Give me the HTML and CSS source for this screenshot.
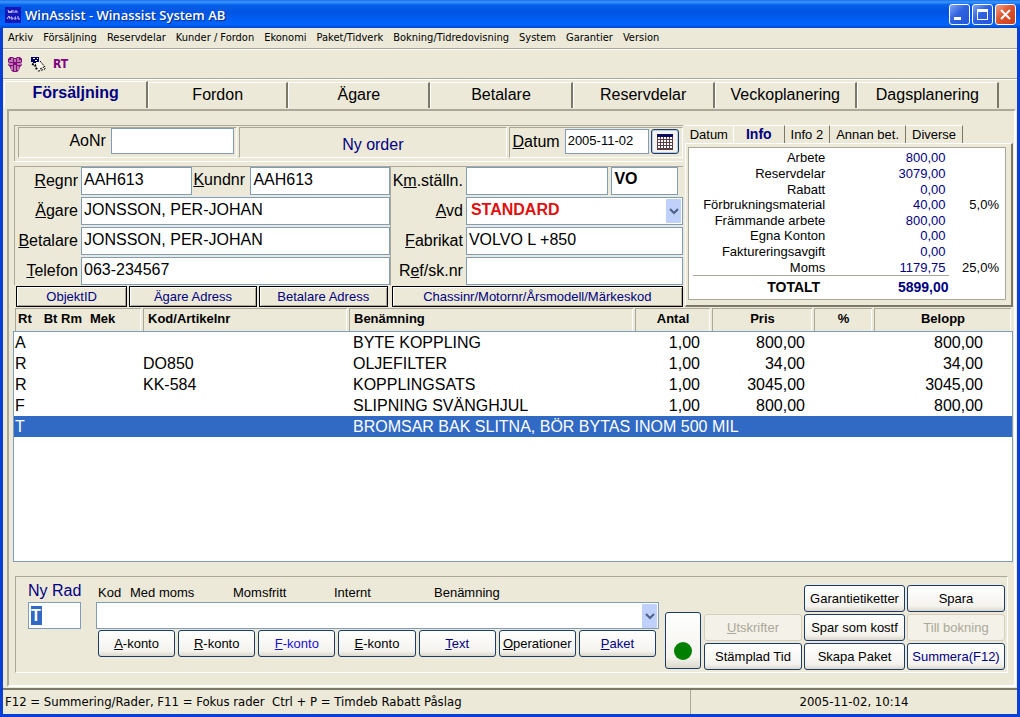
FILE: index.html
```html
<!DOCTYPE html>
<html lang="sv">
<head>
<meta charset="utf-8">
<title>WinAssist - Winassist System AB</title>
<link rel="stylesheet" href="styles.css">
</head>
<body>
<div class="window">
  <header class="titlebar">
    <svg class="app-icon" width="16" height="16" viewBox="0 0 16 16" aria-hidden="true">
      <rect width="16" height="16" fill="#1418b8"/>
      <path d="M3 3l1 3 1-2 1 2 1-3M8 3v3M10 6V4h2v2M2 12l2-3 1 3M7 10h-1v1h2v1H6M11 10h-1v1h1v1H9M13 9v3h2" fill="none" stroke="#c9c4ff"/>
    </svg>
    <h1 class="title">WinAssist - Winassist System AB</h1>
    <div class="caption">
      <button class="cap" aria-label="Minimera"><svg width="19" height="19" viewBox="0 0 19 19"><rect x="4" y="12" width="7" height="3" fill="#fff"/></svg></button>
      <button class="cap" aria-label="Maximera"><svg width="19" height="19" viewBox="0 0 19 19"><path d="M4 4h11v11H4zM5 7h9v7H5z" fill="#fff" fill-rule="evenodd"/></svg></button>
      <button class="cap cap-close" aria-label="Stäng"><svg width="19" height="19" viewBox="0 0 19 19"><path d="M5 5l9 9M14 5l-9 9" stroke="#fff" stroke-width="2"/></svg></button>
    </div>
  </header>

  <div class="client">
    <nav class="menu">
      <a href="#">Arkiv</a><a href="#">Försäljning</a><a href="#">Reservdelar</a><a href="#">Kunder / Fordon</a><a href="#">Ekonomi</a><a href="#">Paket/Tidverk</a><a href="#">Bokning/Tidredovisning</a><a href="#">System</a><a href="#">Garantier</a><a href="#">Version</a>
    </nav>

    <div class="toolbar">
      <button class="tool" aria-label="Kunder"><svg width="16" height="16" viewBox="0 0 16 16">
        <path d="M3 1h3l1 1h2l1-1h3l2 2v3l-1 1 1 2-2 2-1 3-2 2H6l-2-2-1-3-2-2 1-2-1-1V3z" fill="#860a80"/>
        <path d="M5 2v4M11 2v4M3 4v2M13 4v2M2 8h4M10 8h4M5 10v4M11 10v4M8 3v3M8 9v6" stroke="#ece9d8" fill="none"/>
      </svg></button>
      <button class="tool" aria-label="Skriv"><svg width="16" height="16" viewBox="0 0 16 16">
        <path d="M1 1h8v5H6v1H3V6H1z" fill="#000060"/><path d="M3 2h2v1H3zM5 4h2v1H5zM7 2h1v1H7z" fill="#fff"/>
        <path d="M5 8l5-3 5 7-7 3z" fill="#f8f6ec"/>
        <path d="M2 8l3 1 2 5" stroke="#000" stroke-width="2" stroke-dasharray="2 1" fill="none"/>
        <path d="M10 5l5 6v2l-6 2H7M10 13l4-2" stroke="#000" stroke-dasharray="2 1" fill="none"/>
      </svg></button>
      <button class="tool tool-rt">RT</button>
    </div>

    <nav class="tabs">
      <button class="tab active">Försäljning</button><button class="tab">Fordon</button><button class="tab">Ägare</button><button class="tab">Betalare</button><button class="tab">Reservdelar</button><button class="tab">Veckoplanering</button><button class="tab">Dagsplanering</button>
    </nav>

    <main class="page">
      <section class="top">
        <div class="order">
          <div class="order-head">
            <div class="well aonr"><label for="aonr">AoNr</label><input id="aonr" class="field" type="text"></div>
            <div class="well state">Ny order</div>
            <div class="well date"><label for="datum"><u>D</u>atum</label><input id="datum" class="field small" type="text" value="2005-11-02">
              <button class="cal" aria-label="Kalender"><svg width="18" height="18" viewBox="0 0 18 18">
                <rect x="1" y="1" width="16" height="16" fill="#5a3a44"/><rect x="1" y="1" width="16" height="3" fill="#0a0a60"/>
                <path d="M2 5h14M2 8h14M2 11h14M2 14h14" stroke="#fff" stroke-width="2" stroke-dasharray="2 1"/>
              </svg></button></div>
          </div>
          <div class="details">
            <div class="block">
              <label for="regnr"><u>R</u>egnr</label>
              <div class="pair"><input id="regnr" class="field" type="text" value="AAH613"><label for="kundnr"><u>K</u>undnr</label><input id="kundnr" class="field" type="text" value="AAH613"></div>
              <label for="agare"><u>Ä</u>gare</label><input id="agare" class="field" type="text" value="JONSSON, PER-JOHAN">
              <label for="betalare"><u>B</u>etalare</label><input id="betalare" class="field" type="text" value="JONSSON, PER-JOHAN">
              <label for="telefon"><u>T</u>elefon</label><input id="telefon" class="field" type="text" value="063-234567">
            </div>
            <div class="block block-car">
              <label for="km">K<u>m</u>.ställn.</label>
              <div class="pair-km"><input id="km" class="field" type="text"><input class="field strong" type="text" value="VO" aria-label="Märke"></div>
              <label for="avd"><u>A</u>vd</label>
              <div class="combo combo-avd"><select id="avd" class="field"><option>STANDARD</option></select><svg class="drop" width="15" height="24" viewBox="0 0 15 24" aria-hidden="true"><rect width="15" height="24" rx="1"/><path d="M4 10l4 4 4-4"/></svg></div>
              <label for="fabrikat"><u>F</u>abrikat</label><input id="fabrikat" class="field" type="text" value="VOLVO L +850">
              <label for="ref">R<u>e</u>f/sk.nr</label><input id="ref" class="field" type="text">
            </div>
          </div>
          <div class="links">
            <button class="flat">ObjektID</button><button class="flat">Ägare Adress</button><button class="flat">Betalare Adress</button><button class="flat">Chassinr/Motornr/Årsmodell/Märkeskod</button>
          </div>
        </div>

        <aside class="info">
          <nav class="info-tabs">
            <button>Datum</button><button class="active">Info</button><button>Info 2</button><button>Annan bet.</button><button>Diverse</button>
          </nav>
          <div class="info-frame">
            <div class="info-box">
              <table class="sums">
                <tr><th>Arbete</th><td>800,00</td><td class="pct"></td></tr>
                <tr><th>Reservdelar</th><td>3079,00</td><td class="pct"></td></tr>
                <tr><th>Rabatt</th><td>0,00</td><td class="pct"></td></tr>
                <tr><th>Förbrukningsmaterial</th><td>40,00</td><td class="pct">5,0%</td></tr>
                <tr><th>Främmande arbete</th><td>800,00</td><td class="pct"></td></tr>
                <tr><th>Egna Konton</th><td>0,00</td><td class="pct"></td></tr>
                <tr><th>Faktureringsavgift</th><td>0,00</td><td class="pct"></td></tr>
                <tr><th>Moms</th><td>1179,75</td><td class="pct">25,0%</td></tr>
              </table>
              <div class="total"><span>TOTALT</span><b>5899,00</b></div>
            </div>
          </div>
        </aside>
      </section>

      <section class="list">
        <table class="rows">
          <colgroup><col class="c-rt"><col class="c-kod"><col class="c-ben"><col class="c-ant"><col class="c-pris"><col class="c-pct"><col class="c-bel"></colgroup>
          <thead><tr>
            <th><div class="head head-rt"><span>Rt</span><span>Bt Rm</span><span>Mek</span></div></th>
            <th><div class="head">Kod/Artikelnr</div></th>
            <th><div class="head">Benämning</div></th>
            <th><div class="head mid">Antal</div></th>
            <th><div class="head mid">Pris</div></th>
            <th><div class="head mid">%</div></th>
            <th><div class="head mid">Belopp</div></th>
          </tr></thead>
          <tbody>
            <tr><td>A</td><td></td><td>BYTE KOPPLING</td><td>1,00</td><td>800,00</td><td></td><td>800,00</td></tr>
            <tr><td>R</td><td>DO850</td><td>OLJEFILTER</td><td>1,00</td><td>34,00</td><td></td><td>34,00</td></tr>
            <tr><td>R</td><td>KK-584</td><td>KOPPLINGSATS</td><td>1,00</td><td>3045,00</td><td></td><td>3045,00</td></tr>
            <tr><td>F</td><td></td><td>SLIPNING SVÄNGHJUL</td><td>1,00</td><td>800,00</td><td></td><td>800,00</td></tr>
            <tr class="selected"><td>T</td><td></td><td colspan="5">BROMSAR BAK SLITNA, BÖR BYTAS INOM 500 MIL</td></tr>
            <tr class="rest"><td colspan="7"></td></tr>
          </tbody>
        </table>
      </section>

      <section class="entry">
        <div class="newrow"><label for="nyrad">Ny Rad</label><div class="field newrow-field"><input id="nyrad" type="text" value="T"></div></div>
        <div class="line">
          <div class="line-labels"><label for="kod">Kod</label><span>Med moms</span><span>Momsfritt</span><span>Internt</span><span>Benämning</span></div>
          <div class="combo"><select id="kod" class="field"><option></option></select><svg class="drop" width="15" height="24" viewBox="0 0 15 24" aria-hidden="true"><rect width="15" height="24" rx="1"/><path d="M4 10l4 4 4-4"/></svg></div>
          <div class="line-buttons">
            <button class="btn"><u>A</u>-konto</button><button class="btn"><u>R</u>-konto</button><button class="btn blue"><u>F</u>-konto</button><button class="btn"><u>E</u>-konto</button><button class="btn navy"><u>T</u>ext</button><button class="btn"><u>O</u>perationer</button><button class="btn navy"><u>P</u>aket</button>
          </div>
        </div>
        <button class="btn lamp" aria-label="Status"><svg width="20" height="20" viewBox="0 0 20 20"><circle cx="10" cy="10" r="9" fill="#008000"/></svg></button>
        <div class="actions">
          <span></span><button class="btn">Garantietiketter</button><button class="btn">Spara</button>
          <button class="btn" disabled><u>U</u>tskrifter</button><button class="btn">Spar som kostf</button><button class="btn" disabled>Till bokning</button>
          <button class="btn">Stämplad Tid</button><button class="btn">Skapa Paket</button><button class="btn navy">Summera(F12)</button>
        </div>
      </section>
    </main>

    <footer class="status"><span class="keys">F12 = Summering/Rader, F11 = Fokus rader&nbsp; Ctrl + P = Timdeb Rabatt Påslag</span><span class="clock">2005-11-02, 10:14</span></footer>
  </div>
</div>
</body>
</html>
```
FILE: styles.css
```css
* { box-sizing: border-box; }

:root {
  --face: #ece9d8;
  --shade: #aca899;
  --dark: #7b7869;
  --edge: #7f9db9;
  --navy: #000080;
}

body {
  margin: 0;
  background: var(--face);
  color: #000;
  font: 16px/20px "Liberation Sans", Arial, sans-serif;
}

button, input, select { font: inherit; color: inherit; margin: 0; }
button { padding: 0; border: 0; background: none; }

.window {
  display: flex;
  flex-direction: column;
  min-height: 100vh;
  background: #0a3fd6;
}

/* Title bar */
.titlebar {
  display: flex;
  align-items: center;
  gap: 4px;
  height: 28px;
  padding: 1px 4px 0 5px;
  background: linear-gradient(#1c6fe8 0, #3a96ff 2px, #0560e8 5px, #0054e3 12px, #0062fa 22px, #0062fa 25px, #0046c8 28px);
}
.title {
  flex: 1;
  margin: 0;
  color: #fff;
  font: 600 13px/18px "Open Sans", sans-serif;
  text-shadow: 1px 1px 1px #0a2a80;
}
.caption { display: flex; gap: 2px; }
.cap {
  width: 21px;
  height: 21px;
  border: 1px solid #fff;
  border-radius: 3px;
  background: linear-gradient(135deg, #7fa5f5, #2f62e0 45%, #2456d8);
}
.cap svg { display: block; }
.cap-close { background: linear-gradient(135deg, #f0a088, #dc5530 45%, #c83e18); }

.client {
  flex: 1;
  display: flex;
  flex-direction: column;
  margin: 0 3px 3px;
  background: var(--face);
}

/* Menu, toolbar */
.menu {
  display: flex;
  gap: 10px;
  height: 21px;
  padding: 0 5px;
  border-bottom: 1px solid var(--shade);
  font: 11px/19px "DejaVu Sans Condensed", "Noto Sans", sans-serif;
}
.menu a { color: inherit; text-decoration: none; white-space: nowrap; }
.toolbar {
  display: flex;
  align-items: center;
  gap: 7px;
  height: 30px;
  padding: 0 4px;
  border-top: 1px solid #fff;
  border-bottom: 1px solid var(--shade);
}
.tool svg { display: block; }
.tool-rt { color: #800080; font: bold 12px/16px "DejaVu Sans Condensed", sans-serif; }

/* Page tabs */
.tabs {
  display: grid;
  grid-template-columns: 144fr 140fr repeat(5, 142fr);
  padding: 1px 18px 0 1px;
  border-top: 1px solid #fff;
}
.tab {
  height: 26px;
  margin-top: 1px;
  padding-bottom: 1px;
  border-top: 1px solid #fff;
  border-right: 2px solid var(--dark);
  border-left: 1px solid #fff;
}
.tab.active { height: 27px; margin-top: 0; padding-bottom: 4px; color: var(--navy); font-weight: bold; }

/* Page body */
.page {
  flex: 1;
  display: flex;
  flex-direction: column;
  margin: 1px 1px 0 4px;
  padding: 14px 1px 12px 4px;
  border: 2px solid var(--shade);
  border-right-color: #fff;
  border-bottom-color: #fff;
}
.top {
  display: grid;
  grid-template-columns: 668fr 328fr;
  gap: 2px;
  padding-left: 1px;
}
.order-head {
  display: grid;
  grid-template-columns: 219fr 268fr 174fr;
  gap: 2px;
  height: 36px;
  padding: 1px 0 3px 3px;
  border: solid var(--shade);
  border-width: 1px 0 0 1px;
  box-shadow: 0 1px #fff;
}
.well {
  display: flex;
  align-items: flex-start;
  border: 1px solid #fff;
  border-top-color: var(--shade);
  border-left-color: var(--shade);
}
.well label { flex: 1; text-align: right; line-height: 26px; padding-right: 5px; }
.aonr .field { width: 123px; height: 26px; }
.aonr { padding-right: 2px; }
.state { align-items: center; justify-content: center; padding-top: 4px; color: var(--navy); }
.date { padding: 1px 3px 0 0; }
.date .field { width: 84px; height: 25px; }
.field {
  width: 100%;
  min-width: 0;
  height: 28px;
  padding: 0 2px 2px;
  border: 1px solid var(--edge);
  border-radius: 0;
  background: #fff;
}
.field.small { font-size: 13px; }
.field.strong { font-weight: bold; padding-bottom: 4px; }
.cal {
  display: grid;
  place-items: center;
  width: 28px;
  height: 25px;
  margin-left: 2px;
  border: 1px solid #1c3c66;
  border-radius: 3px;
  background: #f4f3ee;
  box-shadow: inset 0 0 0 1px #b8cbe8;
}

.details {
  display: grid;
  grid-template-columns: 375fr 292fr;
  margin-top: 5px;
}
.block {
  display: grid;
  grid-template-columns: 66px 1fr;
  grid-auto-rows: 28px;
  gap: 2px 0;
  align-items: center;
  border-top: 1px solid var(--shade);
  border-left: 1px solid var(--shade);
}
.block-car { grid-template-columns: 75px 1fr; }
.block > label { text-align: right; padding-right: 3px; white-space: nowrap; }
.pair { display: grid; grid-template-columns: 111fr 58px 139fr; }
.pair label { padding-left: 1px; line-height: 26px; }
.pair-km { display: grid; grid-template-columns: 142fr 66fr; gap: 3px; padding-right: 5px; }

.combo { display: grid; }
.combo > * { grid-area: 1 / 1; }
.combo select { appearance: none; padding-left: 4px; }
.combo-avd select { color: #e01010; font-weight: bold; }
.drop { align-self: center; justify-self: end; margin-right: 2px; pointer-events: none; }
.drop rect { fill: #bfd0fa; }
.drop path { fill: none; stroke: #4d6185; stroke-width: 2; }

.links {
  display: grid;
  grid-template-columns: 111fr 127fr 129fr 292fr;
  gap: 2px;
  padding: 1px 0 0 2px;
}
.links .flat:last-child { margin-left: 2px; }
.flat {
  height: 21px;
  border: 1px solid #000;
  box-shadow: inset 1px 1px #fff, inset -1px -1px var(--shade);
  color: var(--navy);
  font-size: 13px;
  line-height: 19px;
}

/* Info card */
.info { display: flex; flex-direction: column; }
.info-tabs { display: flex; height: 18px; font-size: 13px; line-height: 17px; }
.info-tabs button {
  padding: 0 6px;
  border-top: 1px solid #fff;
  border-right: 1px solid var(--dark);
  white-space: nowrap;
}
.info-tabs button:first-child { padding: 0 5px; border-right-color: #fff; }
.info-tabs .active { padding: 0 12px; color: var(--navy); font-weight: bold; font-size: 14px; }
.info-frame {
  flex: 1;
  padding: 3px 5px 5px 2px;
  border: 1px solid #fff;
  border-right: 2px solid var(--dark);
  border-bottom: 2px solid var(--dark);
}
.info-box {
  height: 100%;
  padding: 2px 4px 0;
  border: 1px solid var(--shade);
  background: #fff;
}
.sums {
  width: 100%;
  height: 125px;
  border-collapse: collapse;
  table-layout: fixed;
  font-size: 13px;
  line-height: 15px;
}
.sums th, .sums td { padding: 0; text-align: right; font-weight: normal; white-space: nowrap; }
.sums th { width: 43%; }
.sums td { color: var(--navy); }
.sums .pct { width: 18%; padding-right: 2px; color: #000; }
.total {
  display: grid;
  grid-template-columns: 128fr 129fr;
  width: 83%;
  border-top: 1px solid var(--shade);
  font-weight: bold;
  font-size: 14px;
  line-height: 22px;
  text-align: right;
}
.total b { color: var(--navy); }

/* Order lines */
.list { flex: 1; display: flex; margin-top: 1px; }
.rows {
  width: 100%;
  border-spacing: 0;
  table-layout: fixed;
}
.c-rt { width: 13%; }
.c-kod { width: 20.6%; }
.c-ben { width: 28.6%; }
.c-ant { width: 7.7%; }
.c-pris { width: 10.2%; }
.c-pct { width: 6%; }
.c-bel { width: 13.9%; }
.rows th { height: 23px; padding: 0 2px 0 0; text-align: left; font-size: 13px; }
.rows th:first-child { padding-left: 2px; }
.head {
  height: 23px;
  padding-left: 4px;
  border: solid var(--shade);
  border-width: 1px 0 0 1px;
  box-shadow: inset -1px 0 #fff;
  line-height: 20px;
}
.head.mid { padding: 0; text-align: center; }
.head-rt { display: flex; padding-left: 2px; }
.head-rt span:nth-child(2) { margin-left: 12px; }
.head-rt span:nth-child(3) { margin-left: 8px; }
.rows td { height: 21px; padding: 0; background: #fff; line-height: 21px; white-space: nowrap; }
.rows tbody tr:first-child td { border-top: 1px solid var(--edge); }
.rows td:first-child { padding-left: 1px; border-left: 1px solid var(--edge); }
.rows td:last-child { padding-right: 29px; border-right: 1px solid var(--edge); }
.rows td:nth-child(3) { padding-left: 4px; }
.rows td:nth-child(n+4) { text-align: right; }
.rows td:nth-child(4) { padding-right: 12px; }
.rows td:nth-child(5) { padding-right: 9px; }
.rows .selected td { background: #316ac5; color: #fff; }
.rows .rest td { height: auto; border-bottom: 1px solid var(--edge); }

/* Row entry */
.entry {
  display: flex;
  height: 97px;
  margin: 14px 5px 0 2px;
  padding: 8px 2px 2px 12px;
  border: 1px solid #fff;
  border-top-color: var(--shade);
  border-left-color: var(--shade);
}
.newrow { width: 68px; color: var(--navy); line-height: 12px; }
.newrow label { display: block; height: 17px; }
.newrow-field { display: flex; width: 53px; height: 27px; padding: 3px 2px; }
.newrow-field input {
  width: 11px;
  height: 19px;
  padding: 0;
  border: 0;
  background: #316ac5;
  color: #fff;
  font-weight: bold;
}
.line { flex: 1; min-width: 0; }
.line-labels {
  display: grid;
  grid-template-columns: 32fr 103fr 101fr 100fr 225fr;
  height: 17px;
  padding-left: 2px;
  font-size: 13px;
  line-height: 16px;
}
.line .combo select { height: 27px; }
.line-buttons {
  display: grid;
  grid-template-columns: repeat(7, 1fr);
  gap: 3px;
  padding: 1px 3px 0 2px;
}
.btn {
  height: 27px;
  border: 1px solid #1c3c66;
  border-radius: 3px;
  background: linear-gradient(#fff, #f4f3ee 80%, #dcd8cc);
  font-size: 13px;
  line-height: 20px;
  white-space: nowrap;
}
.btn.navy { color: var(--navy); }
.btn.blue { color: #1a10d0; }
.btn:disabled { border-color: #d2cfbf; background: #f3f1e8; color: #aca899; }
.lamp {
  display: flex;
  align-items: flex-end;
  justify-content: center;
  width: 36px;
  height: 57px;
  margin: 27px 3px 0 6px;
  padding-bottom: 7px;
}
.actions {
  display: grid;
  grid-template-columns: 98px 101px 98px;
  gap: 2px;
  align-content: start;
}

/* Status bar */
.status {
  display: grid;
  grid-template-columns: 688fr 326fr;
  margin-top: 1px;
  border-top: 2px solid var(--dark);
  font: 13px/24px "DejaVu Sans Condensed", "Noto Sans", sans-serif;
}
.keys { padding-left: 2px; border-right: 1px solid var(--shade); }
.clock { text-align: center; }
```
